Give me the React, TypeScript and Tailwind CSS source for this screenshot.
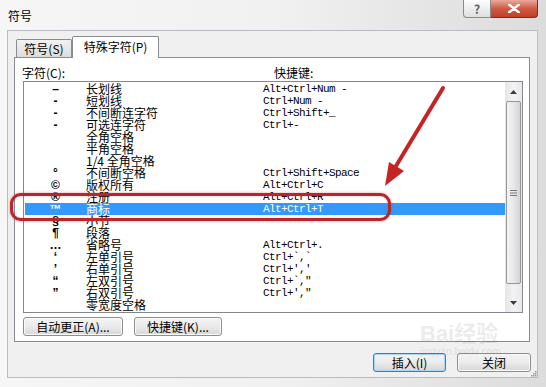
import React from 'react';

type Row = { sym: string; name: string; keys: string };

const rows: Row[] = [
  { sym: '–', name: '长划线', keys: 'Alt+Ctrl+Num -' },
  { sym: '-', name: '短划线', keys: 'Ctrl+Num -' },
  { sym: '-', name: '不间断连字符', keys: 'Ctrl+Shift+_' },
  { sym: '-', name: '可选连字符', keys: 'Ctrl+-' },
  { sym: '', name: '全角空格', keys: '' },
  { sym: '', name: '半角空格', keys: '' },
  { sym: '', name: '1/4 全角空格', keys: '' },
  { sym: '°', name: '不间断空格', keys: 'Ctrl+Shift+Space' },
  { sym: '©', name: '版权所有', keys: 'Alt+Ctrl+C' },
  { sym: '®', name: '注册', keys: 'Alt+Ctrl+R' },
  { sym: '™', name: '商标', keys: 'Alt+Ctrl+T' },
  { sym: '§', name: '小节', keys: '' },
  { sym: '¶', name: '段落', keys: '' },
  { sym: '…', name: '省略号', keys: 'Alt+Ctrl+.' },
  { sym: '‘', name: '左单引号', keys: 'Ctrl+`,`' },
  { sym: '’', name: '右单引号', keys: "Ctrl+','" },
  { sym: '“', name: '左双引号', keys: 'Ctrl+`,"' },
  { sym: '”', name: '右双引号', keys: "Ctrl+',\"" },
  { sym: '', name: '零宽度空格', keys: '' },
];

const SELECTED = 10;

const cjk = "font-['Noto_Sans_CJK_SC','Noto_Sans',sans-serif]";

function Button({ label, width, primary }: { label: string; width: string; primary?: boolean }) {
  return (
    <button
      type="button"
      className={`${width} h-[19px] rounded-[3px] border text-[12px] leading-none text-black bg-gradient-to-b from-[#f4f4f4] via-[#ebebeb] to-[#d6d6d6] ${
        primary
          ? 'border-[#3c7fb1] shadow-[inset_0_0_0_1px_#a7d7f5]'
          : 'border-[#8e8e8e] shadow-[inset_0_0_0_1px_#fafafa]'
      }`}
    >
      {label}
    </button>
  );
}

function Scrollbar() {
  return (
    <div className="w-[17px] h-full flex flex-col bg-gradient-to-r from-[#e6e6e6] via-[#f2f2f2] to-[#e8e8e8]">
      <div className="h-[19px] flex items-center justify-center">
        <svg width="7" height="4" viewBox="0 0 7 4">
          <polygon points="3.5,0 7,4 0,4" fill="#3c3c3c" />
        </svg>
      </div>
      <div className="h-[183px] mx-[1px] rounded-[2px] border border-[#979797] bg-gradient-to-r from-[#f3f3f3] via-[#e8e8e8] to-[#d4d4d4] flex items-center justify-center">
        <svg width="7" height="6" viewBox="0 0 7 6">
          <rect x="0" y="0" width="7" height="1" fill="#777" />
          <rect x="0" y="2.5" width="7" height="1" fill="#777" />
          <rect x="0" y="5" width="7" height="1" fill="#777" />
        </svg>
      </div>
      <div className="flex-1" />
      <div className="h-[18px] flex items-center justify-center">
        <svg width="7" height="4" viewBox="0 0 7 4">
          <polygon points="0,0 7,0 3.5,4" fill="#3c3c3c" />
        </svg>
      </div>
    </div>
  );
}

export default function App() {
  return (
    <div className={`relative w-[546px] h-[387px] overflow-hidden bg-gradient-to-r from-[#f6f6f6] via-[#f1f1f1] to-[#dcdcdc] ${cjk}`}>
      {/* title bar */}
      <div className="h-[30px] flex items-start">
        <div className="pl-[8px] pt-[9px] text-[12px] leading-[14px] text-black">符号</div>
        <div className="ml-auto mr-[8px] flex">
          <div className="w-[28px] h-[18px] rounded-bl-[4px] border border-t-0 border-[#8b8b8b] bg-gradient-to-b from-[#fdfdfd] to-[#dedede] flex items-center justify-center text-[12px] leading-none font-bold text-[#606060]">
            ?
          </div>
          <div className="w-[47px] h-[18px] rounded-br-[4px] border border-t-0 border-l-0 border-[#7a2b22] bg-gradient-to-b from-[#e9a99b] via-[#cf5a43] to-[#c0402a] flex items-center justify-center">
            <svg width="12" height="9" viewBox="0 0 12 9">
              <path d="M1 0.5 L11 8.5 M11 0.5 L1 8.5" stroke="#fff" strokeWidth="2.4" strokeLinecap="round" />
            </svg>
          </div>
        </div>
      </div>

      {/* client area */}
      <div className="ml-[7px] mr-[8px] h-[348px] border border-[#b7bcc2] bg-[#f0f0f0] flex flex-col">
        {/* tabs */}
        <div className="pt-[5px] pl-[8px] flex items-end h-[26px] relative z-10">
          <div className="w-[56px] h-[18px] border border-b-0 border-[#898c95] rounded-t-[2px] bg-gradient-to-b from-[#f2f2f2] to-[#dcdcdc] flex items-center justify-center text-[12px] leading-none text-black">
            符号(S)
          </div>
          <div className="w-[87px] h-[22px] -mb-[1px] border border-b-0 border-[#898c95] rounded-t-[2px] bg-white flex items-center justify-center text-[12px] leading-none text-black pb-[2px]">
            特殊字符(P)
          </div>
        </div>

        {/* tab pane */}
        <div className="ml-[6px] w-[516px] h-[285px] border border-[#898c95] bg-white flex flex-col">
          <div className="pl-[7px] pt-[8px] flex text-[12px] leading-[14px] text-black">
            <div className="w-[252px]">字符(C):</div>
            <div>快捷键:</div>
          </div>

          <div className="ml-[8px] mt-[1px] w-[500px] h-[232px] border border-[#828790] bg-white flex">
            <div className="flex-1 pt-[1px] pl-[1px]">
              {rows.map((r, i) => {
                const sel = i === SELECTED;
                return (
                  <div
                    key={i}
                    className={`h-[12px] flex items-center ${sel ? 'bg-[#3399ff] text-white' : 'text-black'}`}
                  >
                    <div className="w-[61px] text-center text-[12px] leading-[12px] font-['Liberation_Sans',sans-serif] font-bold">
                      {r.sym}
                    </div>
                    <div className="w-[177px] text-[12px] leading-[12px] whitespace-pre">{r.name}</div>
                    <div className="text-[11px] leading-[12px] tracking-[-0.6px] font-['Liberation_Mono',monospace] whitespace-pre">
                      {r.keys}
                    </div>
                  </div>
                );
              })}
            </div>
            <Scrollbar />
          </div>

          <div className="ml-[8px] mt-[4px] flex gap-[11px]">
            <Button label="自动更正(A)..." width="w-[100px]" />
            <Button label="快捷键(K)..." width="w-[88px]" />
          </div>
        </div>

        {/* bottom buttons */}
        <div className="mt-[11px] flex justify-end gap-[11px] pr-[6px]">
          <Button label="插入(I)" width="w-[73px]" primary />
          <Button label="关闭" width="w-[74px]" />
        </div>
      </div>

      {/* watermark */}
      <div className="absolute left-[420px] top-[320px] pointer-events-none select-none text-[#000] opacity-[0.07] leading-none">
        <div className="text-[22px] font-bold font-['Liberation_Sans',sans-serif]">Bai<span className={cjk}>经验</span></div>
        <div className="text-[10px] mt-[2px] font-['Liberation_Sans',sans-serif]">jingyan.baidu.com</div>
      </div>

      {/* resize grip */}
      <svg className="absolute left-[529px] top-[369px]" width="8" height="8" viewBox="0 0 8 8">
        <rect x="6" y="2" width="1.5" height="1.5" fill="#9a9a9a" />
        <rect x="4" y="4" width="1.5" height="1.5" fill="#9a9a9a" />
        <rect x="6" y="4" width="1.5" height="1.5" fill="#9a9a9a" />
        <rect x="2" y="6" width="1.5" height="1.5" fill="#9a9a9a" />
        <rect x="4" y="6" width="1.5" height="1.5" fill="#9a9a9a" />
        <rect x="6" y="6" width="1.5" height="1.5" fill="#9a9a9a" />
      </svg>

      {/* red annotation ring */}
      <div className="absolute left-[10px] top-[193px] w-[381px] h-[28px] rounded-[11px] border-[3px] border-[#b8252a] shadow-[0_0_3px_rgba(190,40,40,0.45),inset_0_0_2px_rgba(190,40,40,0.35)] pointer-events-none" />

      {/* red arrow */}
      <svg className="absolute left-0 top-0 pointer-events-none" width="546" height="387" viewBox="0 0 546 387">
        <line x1="443" y1="88" x2="396" y2="166" stroke="#c42424" strokeWidth="4" strokeLinecap="round" />
        <polygon points="385,186 389,162 404,171" fill="#c42424" />
      </svg>
    </div>
  );
}
